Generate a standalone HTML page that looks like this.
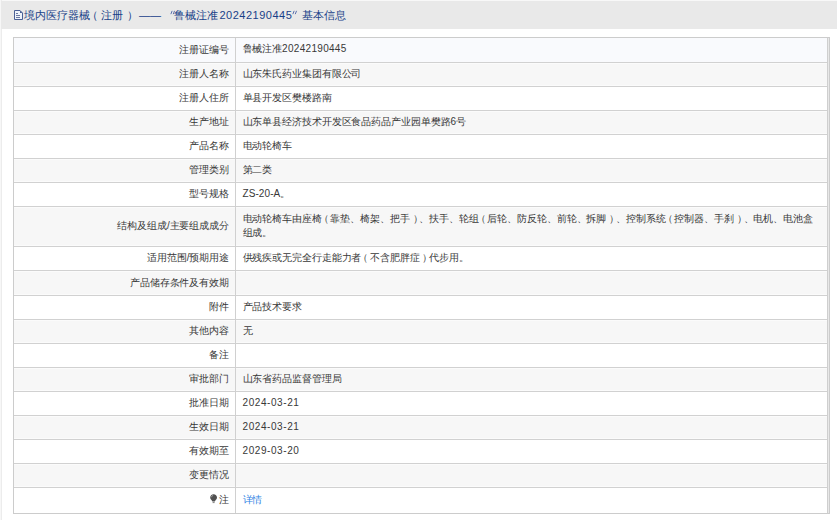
<!DOCTYPE html>
<html><head><meta charset="utf-8"><style>
html,body{margin:0;padding:0;background:#fff;}
body{width:837px;height:520px;position:relative;overflow:hidden;font-family:"Liberation Sans",sans-serif;}
#edge0{position:absolute;left:0;top:0;width:1px;height:520px;background:#f7f7f7}
#edge1{position:absolute;left:1px;top:0;width:1px;height:520px;background:#ececec}
#top0{position:absolute;left:0;top:0;width:837px;height:1px;background:#f8f8f8}
#hdr{position:absolute;left:1px;top:1px;width:836px;height:28px;background:#e9e9e9}
.ts{position:absolute;top:9px;font-size:11px;line-height:13px;color:#183f88;white-space:nowrap}
.dg{letter-spacing:0.5px}
#ico{position:absolute;left:13px;top:9px;width:10px;height:12px}
.r{position:absolute;left:14px;width:813px;font-size:10px;letter-spacing:-0.1px;color:#383838}
.l{position:absolute;left:0;width:215px;top:-0.5px;bottom:0.5px;display:flex;align-items:center;justify-content:flex-end;white-space:nowrap}
.v{position:absolute;left:228.5px;right:0;top:-0.5px;bottom:0.5px;display:flex;align-items:center;white-space:nowrap;line-height:14.5px}
.hl{position:absolute;left:13px;width:815px;height:1px;background:#d1d1d1}
#bt{position:absolute;left:13px;top:37px;width:817px;height:1px;background:#cccccc}
#bb{position:absolute;left:13px;top:513px;width:817px;height:1px;background:#cccccc}
#bl{position:absolute;left:13px;top:37px;width:1px;height:477px;background:#cccccc}
#br0{position:absolute;left:827px;top:37px;width:1px;height:477px;background:#cfcfcf}
#br1{position:absolute;left:828px;top:37px;width:1px;height:477px;background:#e8e8e8}
#br2{position:absolute;left:829px;top:37px;width:1px;height:477px;background:#cccccc}
#vd{position:absolute;left:235px;top:37px;width:1px;height:477px;background:#d0d0d0}
.lnk{color:#2f84e4}
.lt{letter-spacing:0.38px}
.po{margin-left:-3px;margin-right:1.7px}
.pc{margin-left:3px;margin-right:-3px}
.bulb{display:inline-block;width:8px;height:10px;margin-right:1px;vertical-align:top;position:relative;top:1px}
</style></head><body>
<div id="top0"></div><div id="edge0"></div><div id="edge1"></div>
<div id="hdr"></div>
<svg id="ico" viewBox="0 0 10 12"><path d="M1.5 1.5H7L9.5 4V10.5H1.5Z" fill="#eef3fb" stroke="#4a6096" stroke-width="1"/><path d="M7 1.5V4H9.5Z" fill="#4a6096"/><path d="M3 4.5H5M3 6.5H7M3 8.5H7" stroke="#6a78a0" stroke-width="1"/></svg>
<svg style="position:absolute;left:169px;top:10px" width="7" height="5" viewBox="0 0 7 5"><path d="M3 1.2L2 3.8M5.4 1.2L4.4 3.8" stroke="#5a70ad" stroke-width="1" stroke-linecap="round"/></svg><svg style="position:absolute;left:291px;top:10px" width="7" height="5" viewBox="0 0 7 5"><path d="M3 1.2L2 3.8M5.4 1.2L4.4 3.8" stroke="#5a70ad" stroke-width="1" stroke-linecap="round"/></svg><span class="ts" style="left:24px">境内医疗器械</span>
<span class="ts" style="left:87px">（</span>
<span class="ts" style="left:101px">注册</span>
<span class="ts" style="left:127px">）</span>
<span class="ts" style="left:139px">——</span>
<span class="ts" style="left:174.2px">鲁械注准</span>
<span class="ts" style="left:219.5px"><span class="dg">20242190445</span></span>
<span class="ts" style="left:301.8px">基本信息</span>
<div class="r" style="top:38px;height:24px;background:#f9fafd"><div class="l"><div>注册证编号</div></div><div class="v"><div>鲁械注准<span class="lt" style="letter-spacing:0.3px">20242190445</span></div></div></div>
<div class="hl" style="top:62px"></div>
<div class="r" style="top:63px;height:23px;background:#f7f7f7;box-shadow:inset 0 1px 0 #fbfbfb,inset 0 -1px 0 #fbfbfb"><div class="l"><div>注册人名称</div></div><div class="v"><div>山东朱氏药业集团有限公司</div></div></div>
<div class="hl" style="top:86px"></div>
<div class="r" style="top:87px;height:23px;background:#ffffff"><div class="l"><div>注册人住所</div></div><div class="v"><div>单县开发区樊楼路南</div></div></div>
<div class="hl" style="top:110px"></div>
<div class="r" style="top:111px;height:23px;background:#f7f7f7;box-shadow:inset 0 1px 0 #fbfbfb,inset 0 -1px 0 #fbfbfb"><div class="l"><div>生产地址</div></div><div class="v"><div>山东单县经济技术开发区食品药品产业园单樊路6号</div></div></div>
<div class="hl" style="top:134px"></div>
<div class="r" style="top:135px;height:23px;background:#ffffff"><div class="l"><div>产品名称</div></div><div class="v"><div>电动轮椅车</div></div></div>
<div class="hl" style="top:158px"></div>
<div class="r" style="top:159px;height:23px;background:#f7f7f7;box-shadow:inset 0 1px 0 #fbfbfb,inset 0 -1px 0 #fbfbfb"><div class="l"><div>管理类别</div></div><div class="v"><div>第二类</div></div></div>
<div class="hl" style="top:182px"></div>
<div class="r" style="top:183px;height:23px;background:#ffffff"><div class="l"><div>型号规格</div></div><div class="v"><div><span class="lt" style="letter-spacing:0.08px">ZS-20-A</span>。</div></div></div>
<div class="hl" style="top:206px"></div>
<div class="r two" style="top:207px;height:39px;background:#f7f7f7;box-shadow:inset 0 1px 0 #fbfbfb,inset 0 -1px 0 #fbfbfb"><div class="l"><div>结构及组成/主要组成成分</div></div><div class="v"><div>电动轮椅车由座椅<span class="po">（</span>靠垫、椅架、把手<span class="pc">）</span>、扶手、轮组<span class="po">（</span>后轮、防反轮、前轮、拆脚<span class="pc">）</span>、控制系统<span class="po">（</span>控制器、手刹<span class="pc">）</span>、电机、电池盒<br>组成。</div></div></div>
<div class="hl" style="top:246px"></div>
<div class="r" style="top:247px;height:23px;background:#ffffff"><div class="l"><div>适用范围/预期用途</div></div><div class="v"><div>供残疾或无完全行走能力者<span class="po">（</span>不含肥胖症<span class="pc">）</span>代步用。</div></div></div>
<div class="hl" style="top:270px"></div>
<div class="r" style="top:271px;height:24px;background:#f7f7f7;box-shadow:inset 0 1px 0 #fbfbfb,inset 0 -1px 0 #fbfbfb"><div class="l"><div>产品储存条件及有效期</div></div><div class="v"><div></div></div></div>
<div class="hl" style="top:295px"></div>
<div class="r" style="top:296px;height:23px;background:#ffffff"><div class="l"><div>附件</div></div><div class="v"><div>产品技术要求</div></div></div>
<div class="hl" style="top:319px"></div>
<div class="r" style="top:320px;height:23px;background:#f7f7f7;box-shadow:inset 0 1px 0 #fbfbfb,inset 0 -1px 0 #fbfbfb"><div class="l"><div>其他内容</div></div><div class="v"><div>无</div></div></div>
<div class="hl" style="top:343px"></div>
<div class="r" style="top:344px;height:23px;background:#ffffff"><div class="l"><div>备注</div></div><div class="v"><div></div></div></div>
<div class="hl" style="top:367px"></div>
<div class="r" style="top:368px;height:23px;background:#f7f7f7;box-shadow:inset 0 1px 0 #fbfbfb,inset 0 -1px 0 #fbfbfb"><div class="l"><div>审批部门</div></div><div class="v"><div>山东省药品监督管理局</div></div></div>
<div class="hl" style="top:391px"></div>
<div class="r" style="top:392px;height:23px;background:#ffffff"><div class="l"><div>批准日期</div></div><div class="v"><div><span class="lt" style="letter-spacing:0.58px">2024-03-21</span></div></div></div>
<div class="hl" style="top:415px"></div>
<div class="r" style="top:416px;height:23px;background:#f7f7f7;box-shadow:inset 0 1px 0 #fbfbfb,inset 0 -1px 0 #fbfbfb"><div class="l"><div>生效日期</div></div><div class="v"><div><span class="lt" style="letter-spacing:0.58px">2024-03-21</span></div></div></div>
<div class="hl" style="top:439px"></div>
<div class="r" style="top:440px;height:23px;background:#ffffff"><div class="l"><div>有效期至</div></div><div class="v"><div><span class="lt" style="letter-spacing:0.58px">2029-03-20</span></div></div></div>
<div class="hl" style="top:463px"></div>
<div class="r" style="top:464px;height:23px;background:#f7f7f7;box-shadow:inset 0 1px 0 #fbfbfb,inset 0 -1px 0 #fbfbfb"><div class="l"><div>变更情况</div></div><div class="v"><div></div></div></div>
<div class="hl" style="top:487px"></div>
<div class="r" style="top:488px;height:25px;background:#ffffff"><div class="l"><div><svg class="bulb" viewBox="0 0 8 10"><path d="M3.6 0.2C1.7 0.2 0.2 1.6 0.2 3.4C0.2 4.6 0.8 5.3 1.5 6L2.4 7.6H4.8L5.7 6C6.4 5.3 7 4.6 7 3.4C7 1.6 5.5 0.2 3.6 0.2Z" fill="#505050"/><path d="M1.6 3.2C1.6 2.2 2.3 1.5 3.1 1.4" stroke="#c8c8c8" stroke-width="0.7" fill="none"/><rect x="2.6" y="8" width="2" height="1.1" fill="#8a8a8a"/></svg>注</div></div><div class="v"><div><span class="lnk">详情</span></div></div></div>
<div id="vd"></div>
<div id="br0"></div><div id="br1"></div><div id="br2"></div>
<div id="bt"></div><div id="bb"></div><div id="bl"></div>
</body></html>
